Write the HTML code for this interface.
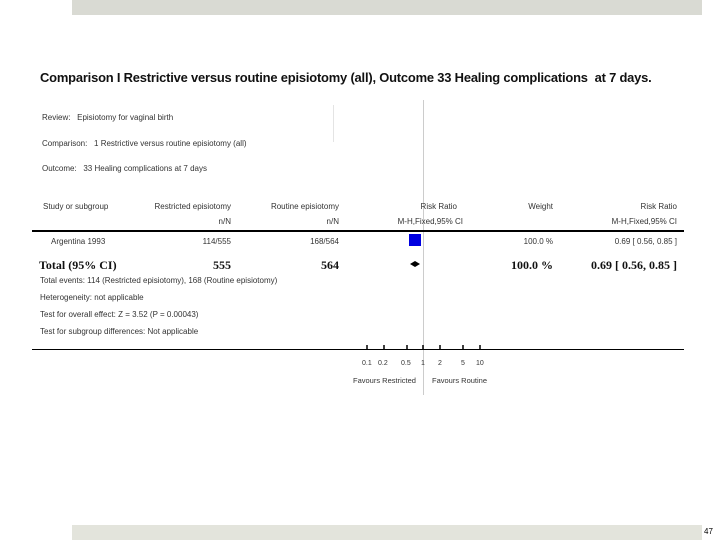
<!DOCTYPE html>
<html><head><meta charset="utf-8"><style>
*{margin:0;padding:0}
body{width:720px;height:540px;position:relative;background:#fff;font-family:"Liberation Sans",sans-serif;color:#333;overflow:hidden}
.a{position:absolute;white-space:nowrap;font-size:8px;line-height:10px}
.r{text-align:right}
.b{font-family:"Liberation Serif",serif;font-weight:bold;font-size:12px;line-height:14px;color:#111}
</style></head><body>
<div style="position:absolute;left:72px;top:0;width:630px;height:15px;background:#d9dad3"></div>
<div style="position:absolute;left:72px;top:525px;width:630px;height:15px;background:#e3e4dc"></div>
<div class="a" style="left:704px;top:527px;font-size:8px;color:#000">47</div>
<div class="a" style="left:40px;top:70px;font-size:13px;line-height:16px;font-weight:bold;color:#111;letter-spacing:-0.2px;transform:scaleX(0.995);transform-origin:left">Comparison I Restrictive versus routine episiotomy (all), Outcome 33 Healing complications &nbsp;at 7 days.</div>
<div style="position:absolute;left:333px;top:105px;width:1px;height:37px;background:#e4e4e4"></div>
<div style="position:absolute;left:423px;top:100px;width:1px;height:295px;background:#ccc"></div>
<div class="a" style="left:42px;top:113px">Review: &nbsp;&nbsp;Episiotomy for vaginal birth</div>
<div class="a" style="left:42px;top:139px">Comparison: &nbsp;&nbsp;1 Restrictive versus routine episiotomy (all)</div>
<div class="a" style="left:42px;top:164px">Outcome: &nbsp;&nbsp;33 Healing complications at 7 days</div>
<div class="a" style="left:43px;top:202px">Study or subgroup</div>
<div class="a r" style="left:131px;width:100px;top:202px">Restricted episiotomy</div>
<div class="a r" style="left:239px;width:100px;top:202px">Routine episiotomy</div>
<div class="a r" style="left:131px;width:100px;top:217px">n/N</div>
<div class="a r" style="left:239px;width:100px;top:217px">n/N</div>
<div class="a r" style="left:357px;width:100px;top:202px">Risk Ratio</div>
<div class="a r" style="left:357px;width:106px;top:217px">M-H,Fixed,95% CI</div>
<div class="a r" style="left:453px;width:100px;top:202px">Weight</div>
<div class="a r" style="left:577px;width:100px;top:202px">Risk Ratio</div>
<div class="a r" style="left:577px;width:100px;top:217px">M-H,Fixed,95% CI</div>
<div style="position:absolute;left:32px;top:230px;width:652px;height:2px;background:#000"></div>
<div class="a" style="left:51px;top:237px">Argentina 1993</div>
<div class="a r" style="left:131px;width:100px;top:237px">114/555</div>
<div class="a r" style="left:239px;width:100px;top:237px">168/564</div>
<div style="position:absolute;left:409px;top:234px;width:12px;height:12px;background:#0000e0"></div>
<div class="a r" style="left:453px;width:100px;top:237px">100.0 %</div>
<div class="a r" style="left:577px;width:100px;top:237px">0.69 [ 0.56, 0.85 ]</div>
<div class="a b" style="left:39px;top:258px">Total (95% CI)</div>
<div class="a b r" style="left:131px;width:100px;top:258px">555</div>
<div class="a b r" style="left:239px;width:100px;top:258px">564</div>
<svg style="position:absolute;left:410px;top:261px" width="10" height="6"><polygon points="0,3 5,0 10,3 5,6" fill="#000"/></svg>
<div class="a b r" style="left:453px;width:100px;top:258px">100.0 %</div>
<div class="a b r" style="left:557px;width:120px;top:258px">0.69 [ 0.56, 0.85 ]</div>
<div class="a" style="left:40px;top:276px">Total events: 114 (Restricted episiotomy), 168 (Routine episiotomy)</div>
<div class="a" style="left:40px;top:293px">Heterogeneity: not applicable</div>
<div class="a" style="left:40px;top:310px">Test for overall effect: Z = 3.52 (P = 0.00043)</div>
<div class="a" style="left:40px;top:327px">Test for subgroup differences: Not applicable</div>
<div style="position:absolute;left:32px;top:349px;width:652px;height:1px;background:#000"></div>
<svg style="position:absolute;left:360px;top:345px" width="130" height="5">
<g stroke="#000" stroke-width="1.5"><line x1="7" y1="0" x2="7" y2="4"/><line x1="24" y1="0" x2="24" y2="4"/><line x1="47" y1="0" x2="47" y2="4"/><line x1="63" y1="0" x2="63" y2="4"/><line x1="80" y1="0" x2="80" y2="4"/><line x1="103" y1="0" x2="103" y2="4"/><line x1="120" y1="0" x2="120" y2="4"/></g></svg>
<div class="a" style="left:362px;top:359px;font-size:7px">0.1</div>
<div class="a" style="left:378px;top:359px;font-size:7px">0.2</div>
<div class="a" style="left:401px;top:359px;font-size:7px">0.5</div>
<div class="a" style="left:421px;top:359px;font-size:7px">1</div>
<div class="a" style="left:438px;top:359px;font-size:7px">2</div>
<div class="a" style="left:461px;top:359px;font-size:7px">5</div>
<div class="a" style="left:476px;top:359px;font-size:7px">10</div>
<div class="a" style="left:353px;top:376px;font-size:7.5px">Favours Restricted</div>
<div class="a" style="left:432px;top:376px;font-size:7.5px">Favours Routine</div>
</body></html>
